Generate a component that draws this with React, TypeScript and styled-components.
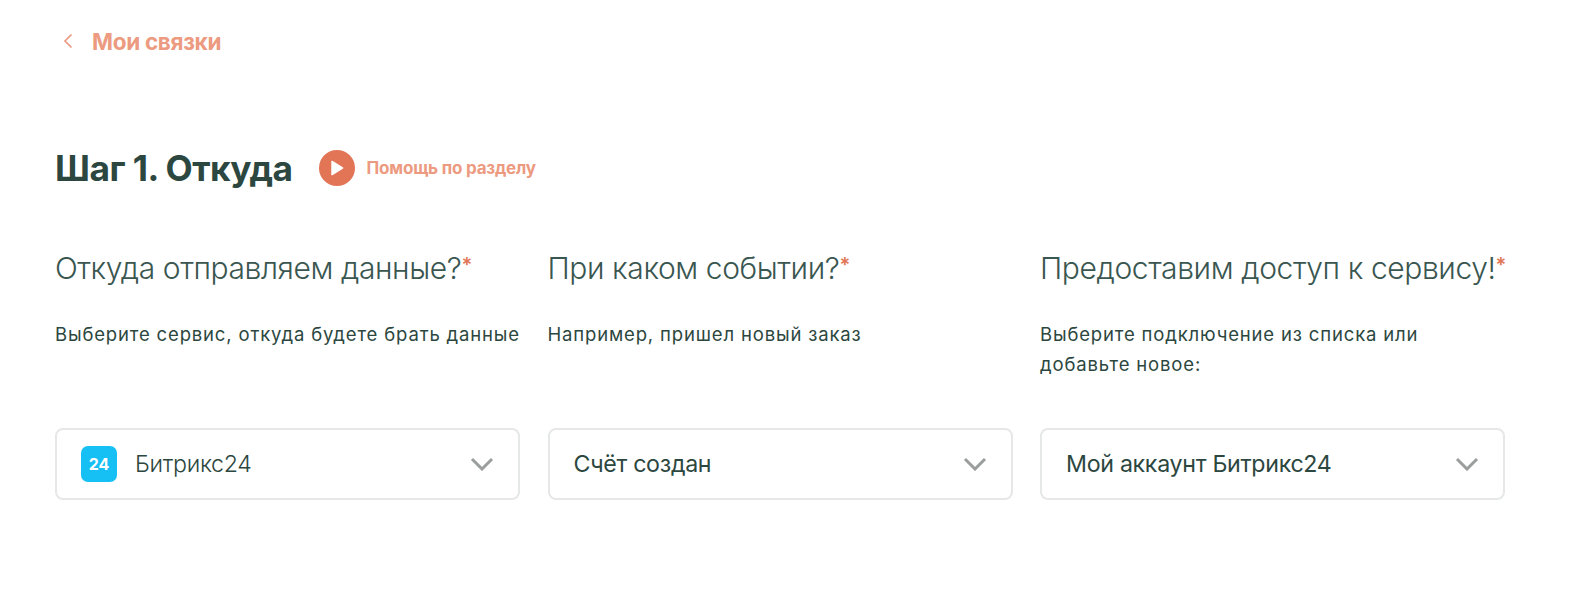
import React from 'react';
import styled, { createGlobalStyle } from 'styled-components';

const GlobalStyle = createGlobalStyle`
  html, body {
    margin: 0;
    padding: 0;
    background: #fff;
    font-family: Inter, "Noto Sans", sans-serif;
    color: #2c4740;
  }
`;

const Page = styled.div`
  width: 1589px;
  height: 595px;
  box-sizing: border-box;
  padding: 27px 83px 0 55px;
  overflow: hidden;
`;

const BackLink = styled.a`
  display: flex;
  align-items: center;
  gap: 19px;
  height: 28px;
  padding-left: 8px;
  color: #ec9a80;
  font-size: 22.5px;
  font-weight: 700;
  letter-spacing: -0.3px;
`;

const HeadingRow = styled.div`
  display: flex;
  align-items: center;
  margin-top: 94px;
  height: 38px;
`;

const Heading = styled.h1`
  margin: 0;
  font-size: 35.3px;
  font-weight: 700;
  letter-spacing: -0.5px;
  color: #2c4740;
`;

const HelpButton = styled.a`
  display: flex;
  align-items: center;
  gap: 12px;
  margin-left: 26px;
  color: #ec9a80;
  font-size: 17px;
  font-weight: 700;
  letter-spacing: -0.2px;
`;

const PlayCircle = styled.span`
  width: 36px;
  height: 36px;
  border-radius: 50%;
  background: #e27556;
  display: flex;
  align-items: center;
  justify-content: center;
`;

const Columns = styled.div`
  display: grid;
  grid-template-columns: repeat(3, 465px);
  column-gap: 27.5px;
  margin-top: 62px;
`;

const Column = styled.div`
  display: flex;
  flex-direction: column;
`;

const Question = styled.h2`
  margin: 0;
  height: 38px;
  line-height: 38px;
  font-size: 30px;
  font-weight: 300;
  letter-spacing: -0.4px;
  white-space: nowrap;
  color: #3a5650;
`;

const Star = styled.sup`
  color: #e27556;
  font-size: 20px;
  font-weight: 600;
  line-height: 0;
  vertical-align: 7px;
`;

const Hint = styled.p`
  margin: 33px 0 0;
  height: 108px;
  font-size: 18.5px;
  line-height: 29.5px;
  letter-spacing: 0.84px;
  color: #2c4740;
`;

const Select = styled.div`
  display: flex;
  align-items: center;
  height: 72px;
  box-sizing: border-box;
  padding: 0 24px;
  border: 2px solid #e6e8e8;
  border-radius: 8px;
  background: #fff;
`;

const ServiceBadge = styled.span`
  width: 36px;
  height: 36px;
  border-radius: 7px;
  background: #16c0f5;
  color: #fff;
  font-size: 16px;
  font-weight: 700;
  display: flex;
  align-items: center;
  justify-content: center;
  margin-right: 18px;
`;

const SelectValue = styled.span<{ $light?: boolean }>`
  flex: 1;
  font-size: 23.2px;
  letter-spacing: -0.3px;
  font-weight: ${({ $light }) => ($light ? 300 : 400)};
  color: #2c4740;
`;

const Chevron = () => (
  <svg width="24" height="14" viewBox="0 0 24 14" fill="none">
    <path d="M2 2l10 10L22 2" stroke="#9a9e9d" strokeWidth="3" />
  </svg>
);

const columns = [
  {
    question: 'Откуда отправляем данные?',
    hint: 'Выберите сервис, откуда будете брать данные',
    value: 'Битрикс24',
    badge: true,
  },
  {
    question: 'При каком событии?',
    hint: 'Например, пришел новый заказ',
    value: 'Счёт создан',
  },
  {
    question: 'Предоставим доступ к сервису!',
    hint: 'Выберите подключение из списка или добавьте новое:',
    value: 'Мой аккаунт Битрикс24',
  },
];

export default function App() {
  return (
    <Page>
      <GlobalStyle />
      <BackLink>
        <svg width="10" height="16" viewBox="0 0 10 16" fill="none">
          <path d="M8.5 1.5L2 8l6.5 6.5" stroke="#ec9a80" strokeWidth="1.7" />
        </svg>
        Мои связки
      </BackLink>
      <HeadingRow>
        <Heading>Шаг 1. Откуда</Heading>
        <HelpButton>
          <PlayCircle>
            <svg width="14" height="16" viewBox="0 0 14 16">
              <path d="M2 1.5L12.5 8 2 14.5z" fill="#fff" stroke="#fff" strokeWidth="1.5" strokeLinejoin="round" />
            </svg>
          </PlayCircle>
          Помощь по разделу
        </HelpButton>
      </HeadingRow>
      <Columns>
        {columns.map((col) => (
          <Column key={col.question}>
            <Question>
              {col.question}
              <Star>*</Star>
            </Question>
            <Hint>{col.hint}</Hint>
            <Select>
              {col.badge && <ServiceBadge>24</ServiceBadge>}
              <SelectValue $light={col.badge}>{col.value}</SelectValue>
              <Chevron />
            </Select>
          </Column>
        ))}
      </Columns>
    </Page>
  );
}
